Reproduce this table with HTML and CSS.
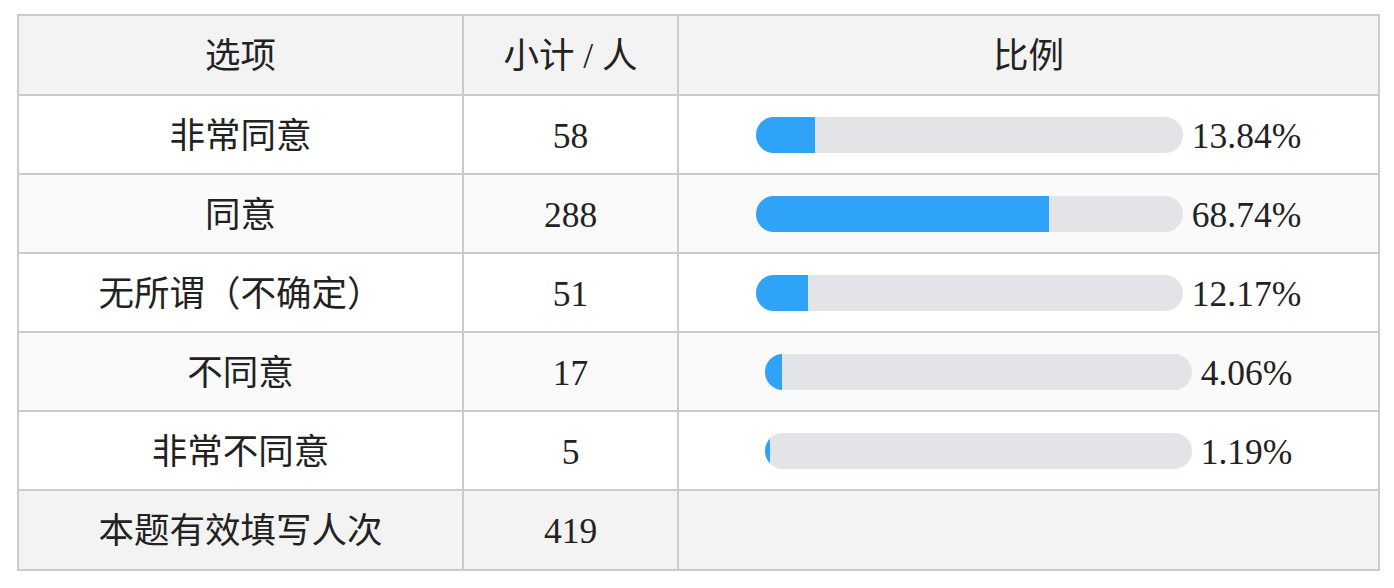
FILE: index.html
```html
<!DOCTYPE html>
<html lang="zh-CN">
<head>
<meta charset="utf-8">
<title>统计表</title>
<link rel="stylesheet" href="styles.css">
</head>
<body>
<div class="wrap">
  <table class="stats">
    <colgroup>
      <col class="c-opt">
      <col class="c-num">
      <col class="c-pct">
    </colgroup>
    <thead>
      <tr class="head"><th>选项</th><th>小计 / 人</th><th>比例</th></tr>
    </thead>
    <tbody>
      <tr>
        <td>非常同意</td><td>58</td>
        <td><div class="ratio"><div class="track"><div class="fill" style="width:13.84%"></div></div><span class="pct">13.84%</span></div></td>
      </tr>
      <tr class="alt">
        <td>同意</td><td>288</td>
        <td><div class="ratio"><div class="track"><div class="fill" style="width:68.74%"></div></div><span class="pct">68.74%</span></div></td>
      </tr>
      <tr>
        <td>无所谓（不确定）</td><td>51</td>
        <td><div class="ratio"><div class="track"><div class="fill" style="width:12.17%"></div></div><span class="pct">12.17%</span></div></td>
      </tr>
      <tr class="alt">
        <td>不同意</td><td>17</td>
        <td><div class="ratio"><div class="track"><div class="fill" style="width:4.06%"></div></div><span class="pct">4.06%</span></div></td>
      </tr>
      <tr>
        <td>非常不同意</td><td>5</td>
        <td><div class="ratio"><div class="track"><div class="fill" style="width:1.19%"></div></div><span class="pct">1.19%</span></div></td>
      </tr>
      <tr class="total">
        <td>本题有效填写人次</td><td>419</td><td></td>
      </tr>
    </tbody>
  </table>
</div>
</body>
</html>
```

FILE: styles.css
```css
html, body {
  margin: 0;
  padding: 0;
  background: #ffffff;
}

body {
  font-family: "Liberation Serif", "Noto Sans CJK SC", serif;
  font-size: 35.5px;
  color: #222222;
}

.wrap {
  padding: 14px 0 0 17px;
}

.stats {
  border-collapse: collapse;
  table-layout: fixed;
  width: 1361px;
}

.c-opt { width: 445px; }
.c-num { width: 215px; }
.c-pct { width: 701px; }

.stats th,
.stats td {
  border: 2px solid #cbcbcb;
  text-align: center;
  vertical-align: middle;
  padding: 2px 0 0;
  font-weight: normal;
  height: 75px;
  line-height: 40px;
}

.head th {
  background: #f3f3f3;
  height: 76px;
}

.alt td {
  background: #fafafa;
}

.total td {
  background: #f3f3f3;
  height: 76px;
}

.ratio {
  display: flex;
  align-items: center;
  justify-content: center;
  gap: 9px;
  margin-top: -2px;
}

.track {
  width: 427px;
  height: 36px;
  border-radius: 18px;
  background: #e2e4e7;
  overflow: hidden;
  display: flex;
}

.fill {
  height: 100%;
  background: #2ea3f8;
}

.pct {
  line-height: 36px;
  padding-top: 2px;
}
```
